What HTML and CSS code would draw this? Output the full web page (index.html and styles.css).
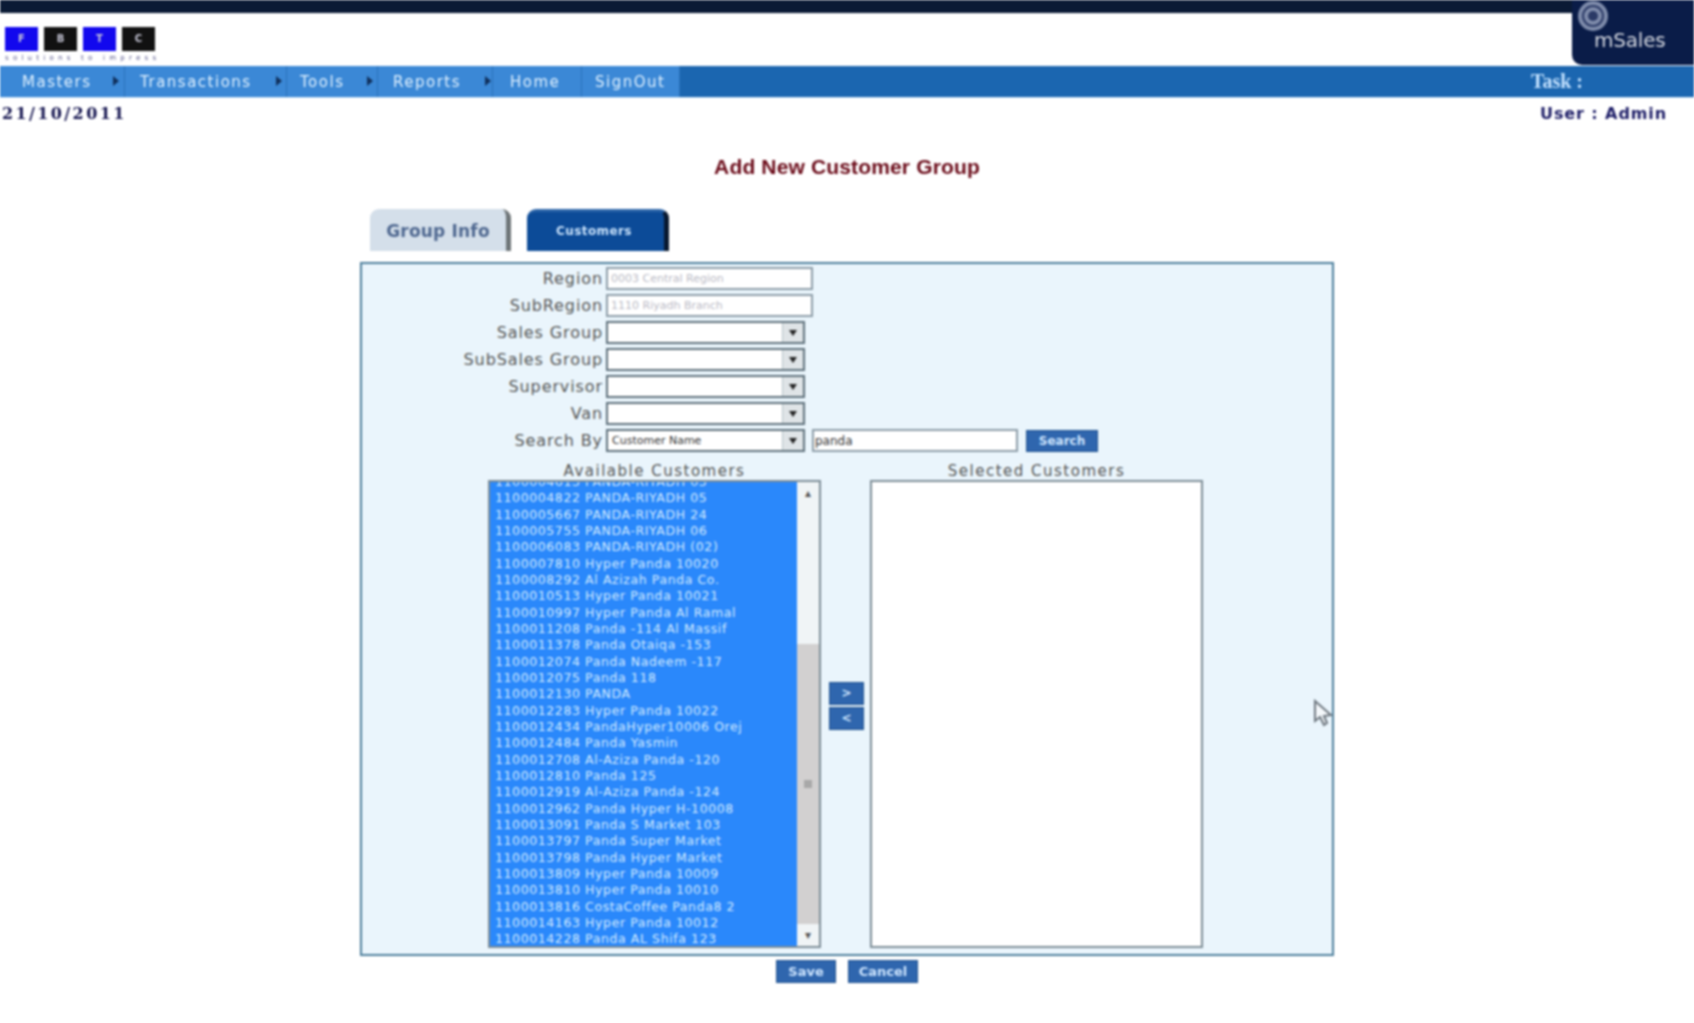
FILE: index.html
```html
<!DOCTYPE html>
<html lang="en">
<head>
    <meta charset="UTF-8">
    <meta name="viewport" content="width=device-width, initial-scale=1.0">
    <title>Add New Customer Group</title>
    <link rel="stylesheet" href="styles.css">
</head>
<body>
    <div class="page">
        <div class="topbar"></div>
        <div class="header">
            <div class="logo">
                <div class="logo-boxes">
                    <span class="logo-box blue">F</span>
                    <span class="logo-box black">B</span>
                    <span class="logo-box blue">T</span>
                    <span class="logo-box black">C</span>
                </div>
                <div class="logo-tag">solutions to impress</div>
            </div>
        </div>
        <div class="brand">
            <svg class="brand-icon" width="32" height="32" viewBox="0 0 32 32">
                <circle cx="16" cy="16" r="15" fill="#7f8cab"/>
                <circle cx="16" cy="16" r="10" fill="none" stroke="#2b3a66" stroke-width="2"/>
                <circle cx="16" cy="16" r="5" fill="#2b3a66"/>
            </svg>
            <span class="brand-name">mSales</span>
        </div>
        <div class="nav">
            <ul class="menu">
                <li class="menu-item item-masters">Masters<span class="menu-arrow"></span></li>
                <li class="menu-item item-transactions">Transactions<span class="menu-arrow"></span></li>
                <li class="menu-item item-tools">Tools<span class="menu-arrow"></span></li>
                <li class="menu-item item-reports">Reports<span class="menu-arrow"></span></li>
                <li class="menu-item item-home">Home</li>
                <li class="menu-item item-signout">SignOut</li>
            </ul>
            <div class="task">Task :</div>
        </div>
        <div class="info">
            <div class="date">21/10/2011</div>
            <div class="user">User : Admin</div>
        </div>
        <h1 class="title">Add New Customer Group</h1>

        <div class="wrap">
            <div class="tabs">
                <div class="tab tab-info">Group Info</div>
                <div class="tab tab-customers">Customers</div>
            </div>
            <div class="panel">
                <div class="form">
                    <label class="lbl">Region</label>
                    <input class="text wide" type="text" value="0003 Central Region" disabled>

                    <label class="lbl">SubRegion</label>
                    <input class="text wide" type="text" value="1110 Riyadh Branch" disabled>

                    <label class="lbl">Sales Group</label>
                    <div class="select"><span class="select-value"></span><span class="select-btn"></span></div>

                    <label class="lbl">SubSales Group</label>
                    <div class="select"><span class="select-value"></span><span class="select-btn"></span></div>

                    <label class="lbl">Supervisor</label>
                    <div class="select"><span class="select-value"></span><span class="select-btn"></span></div>

                    <label class="lbl">Van</label>
                    <div class="select"><span class="select-value"></span><span class="select-btn"></span></div>

                    <label class="lbl">Search By</label>
                    <div class="search-row">
                        <div class="select"><span class="select-value">Customer Name</span><span class="select-btn"></span></div>
                        <input class="text search-text" type="text" value="panda">
                        <button class="btn btn-search">Search</button>
                    </div>
                </div>

                <div class="lists">
                    <div class="list-col">
                        <div class="list-title">Available Customers</div>
                        <div class="listbox">
                            <div class="options">
                                <div class="opt">1100004613 PANDA-RIYADH 03</div>
                                <div class="opt">1100004822 PANDA-RIYADH 05</div>
                                <div class="opt">1100005667 PANDA-RIYADH 24</div>
                                <div class="opt">1100005755 PANDA-RIYADH 06</div>
                                <div class="opt">1100006083 PANDA-RIYADH (02)</div>
                                <div class="opt">1100007810 Hyper Panda 10020</div>
                                <div class="opt">1100008292 Al Azizah Panda Co.</div>
                                <div class="opt">1100010513 Hyper Panda 10021</div>
                                <div class="opt">1100010997 Hyper Panda Al Ramal</div>
                                <div class="opt">1100011208 Panda -114 Al Massif</div>
                                <div class="opt">1100011378 Panda Otaiqa -153</div>
                                <div class="opt">1100012074 Panda Nadeem -117</div>
                                <div class="opt">1100012075 Panda 118</div>
                                <div class="opt">1100012130 PANDA</div>
                                <div class="opt">1100012283 Hyper Panda 10022</div>
                                <div class="opt">1100012434 PandaHyper10006 Orej</div>
                                <div class="opt">1100012484 Panda Yasmin</div>
                                <div class="opt">1100012708 Al-Aziza Panda -120</div>
                                <div class="opt">1100012810 Panda 125</div>
                                <div class="opt">1100012919 Al-Aziza Panda -124</div>
                                <div class="opt">1100012962 Panda Hyper H-10008</div>
                                <div class="opt">1100013091 Panda S Market 103</div>
                                <div class="opt">1100013797 Panda Super Market</div>
                                <div class="opt">1100013798 Panda Hyper Market</div>
                                <div class="opt">1100013809 Hyper Panda 10009</div>
                                <div class="opt">1100013810 Hyper Panda 10010</div>
                                <div class="opt">1100013816 CostaCoffee Panda8 2</div>
                                <div class="opt">1100014163 Hyper Panda 10012</div>
                                <div class="opt">1100014228 Panda AL Shifa 123</div>
                            </div>
                            <div class="scrollbar">
                                <div class="scroll-btn">&#9652;</div>
                                <div class="scroll-space"></div>
                                <div class="scroll-thumb"><span class="scroll-grip"></span></div>
                                <div class="scroll-btn">&#9662;</div>
                            </div>
                        </div>
                    </div>
                    <div class="move">
                        <button class="btn btn-move">&gt;</button>
                        <button class="btn btn-move">&lt;</button>
                    </div>
                    <div class="list-col">
                        <div class="list-title">Selected Customers</div>
                        <div class="listbox empty"></div>
                    </div>
                </div>
                <svg class="cursor" width="20" height="28" viewBox="0 0 20 28">
                    <path d="M2 2 L2 22 L7 18 L11 26 L14 24 L11 17 L18 16 Z" fill="#f4f8fb" stroke="#6f7880" stroke-width="2"/>
                </svg>
            </div>
            <div class="actions">
                <button class="btn btn-save">Save</button>
                <button class="btn btn-cancel">Cancel</button>
            </div>
        </div>
    </div>
</body>
</html>
```

FILE: styles.css
```css
html, body {
    margin: 0;
    padding: 0;
    background: #fff;
}
.page {
    position: relative;
    height: 1023px;
    overflow: hidden;
    font-family: 'DejaVu Sans', sans-serif;
    filter: blur(0.8px);
}
.topbar {
    height: 13px;
    background: #0a1a35;
}
.header {
    height: 53px;
    padding: 14px 0 0 5px;
    box-sizing: border-box;
}
.logo-boxes {
    display: flex;
    gap: 5px;
}
.logo-box {
    width: 33px;
    height: 24px;
    margin-right: 1px;
    color: #c8c8d8;
    font-size: 10px;
    font-weight: bold;
    line-height: 24px;
    text-align: center;
}
.logo-box.blue { background: #1208ee; }
.logo-box.black { background: #111; }
.logo-tag {
    margin-top: 2px;
    color: #55558a;
    font-size: 7px;
    letter-spacing: 4.25px;
    line-height: 10px;
    white-space: nowrap;
}
.brand {
    position: absolute;
    top: 0;
    right: 0;
    width: 122px;
    height: 65px;
    background: #0a1c48;
    border-bottom-left-radius: 10px;
}
.brand-icon {
    position: absolute;
    top: 0;
    left: 5px;
}
.brand-name {
    position: absolute;
    top: 28px;
    left: 22px;
    color: #d5d8e0;
    font-size: 20px;
    letter-spacing: -0.2px;
}
.nav {
    height: 32px;
    display: flex;
    justify-content: space-between;
    background: #1b66b0;
    border-bottom: 1px solid #cfe6fa;
    box-sizing: border-box;
}
.menu {
    display: flex;
    margin: 0;
    padding: 0;
    list-style: none;
    background: #3b88d6;
}
.menu-item {
    position: relative;
    box-sizing: border-box;
    color: #e2f2ff;
    font-size: 15px;
    letter-spacing: 1.5px;
    line-height: 33px;
    border-right: 1px solid #2a72bb;
    white-space: nowrap;
}
.menu-arrow {
    position: absolute;
    top: 10px;
    right: 4px;
    border-left: 6px solid #10305c;
    border-top: 5px solid transparent;
    border-bottom: 5px solid transparent;
}
.item-masters { width: 125px; padding-left: 22px; }
.item-transactions { width: 162px; padding-left: 15px; }
.item-tools { width: 91px; padding-left: 13px; }
.item-reports { width: 115px; padding-left: 15px; }
.item-home { width: 89px; padding-left: 17px; }
.item-signout { width: 98px; padding-left: 13px; }
.item-masters .menu-arrow { right: 5px; }
.item-reports .menu-arrow { right: 1px; }
.task {
    margin-right: 111px;
    color: #c4e2ff;
    font-family: 'Liberation Serif', serif;
    font-size: 20px;
    font-weight: bold;
    line-height: 30px;
}
.info {
    display: flex;
    justify-content: space-between;
    height: 30px;
    padding: 6px 27px 0 2px;
    box-sizing: border-box;
    color: #1c1c66;
    font-weight: bold;
    line-height: 20px;
}
.date {
    font-family: 'DejaVu Serif', serif;
    font-size: 16px;
    color: #14144f;
    letter-spacing: 2.4px;
}
.user {
    font-size: 16px;
    letter-spacing: 0.9px;
}
.title {
    margin: 26px 0 0;
    color: #6a0a18;
    font-family: 'Liberation Sans', sans-serif;
    font-size: 21px;
    font-weight: bold;
    letter-spacing: 0.15px;
    line-height: 26px;
    text-align: center;
}
.wrap {
    width: 974px;
    margin: 29px 0 0 360px;
}
.tabs {
    display: flex;
    gap: 16px;
    height: 42px;
    padding-left: 10px;
    margin-bottom: 11px;
}
.tab {
    box-sizing: border-box;
    width: 141px;
    border-radius: 9px 9px 0 0;
    text-align: center;
    font-weight: bold;
}
.tab-info {
    background: #d4dfea;
    border-right: 5px solid #6e7578;
    color: #4f6890;
    font-size: 17px;
    letter-spacing: 0.2px;
    line-height: 44px;
}
.tab-customers {
    width: 142px;
    padding-right: 3px;
    background: #0c4b98;
    border-top: 3px solid #2b64a8;
    border-right: 5px solid #08182f;
    color: #c9e2fb;
    font-size: 12px;
    letter-spacing: 0.4px;
    line-height: 38px;
}
.panel {
    position: relative;
    box-sizing: border-box;
    height: 694px;
    padding-top: 1px;
    background: #eaf5fc;
    border: 2px solid #4d7f9c;
}
.form {
    display: grid;
    grid-template-columns: 241px auto;
    column-gap: 3px;
    grid-auto-rows: 27px;
    align-items: center;
}
.lbl {
    color: #555;
    font-size: 16px;
    letter-spacing: 0.9px;
    line-height: 20px;
    text-align: right;
    white-space: nowrap;
}
.text {
    box-sizing: border-box;
    height: 23px;
    padding: 0 3px;
    background: #fff;
    border: 2px solid #8d9da8;
    color: #333;
    font-family: 'DejaVu Sans', sans-serif;
    font-size: 11px;
}
.text:disabled {
    color: #b9b9c4;
}
.wide {
    width: 207px;
}
.select {
    box-sizing: border-box;
    display: flex;
    width: 199px;
    height: 23px;
    background: #fff;
    border: 2px solid #5f717c;
}
.select-value {
    flex: 1;
    padding-left: 4px;
    color: #333;
    font-size: 11px;
    line-height: 19px;
}
.select-btn {
    position: relative;
    width: 20px;
    background: #dfe4e7;
    border-left: 1px solid #b6c2c9;
}
.select-btn::after {
    content: "";
    position: absolute;
    top: 7px;
    left: 6px;
    border-top: 6px solid #222;
    border-left: 4px solid transparent;
    border-right: 4px solid transparent;
}
.search-row {
    display: flex;
    align-items: center;
}
.search-text {
    width: 206px;
    margin-left: 7px;
    font-size: 12px;
    padding: 0 1px;
}
.btn {
    box-sizing: border-box;
    padding: 0;
    background: #2f66ae;
    border: 1px solid #23548f;
    color: #cfe6ff;
    font-family: 'DejaVu Sans', sans-serif;
    font-weight: bold;
}
.btn-search {
    width: 72px;
    height: 22px;
    margin-left: 8px;
    font-size: 12px;
}
.lists {
    display: flex;
    align-items: center;
    margin-top: 8px;
    padding-left: 126px;
}
.list-col {
    width: 333px;
}
.list-title {
    height: 18px;
    color: #555;
    font-size: 15px;
    letter-spacing: 1.5px;
    line-height: 18px;
    text-align: center;
    white-space: nowrap;
}
.listbox {
    display: flex;
    box-sizing: border-box;
    height: 468px;
    overflow: hidden;
    background: #fff;
    border: 2px solid #7d8d97;
}
.options {
    flex: 1;
    padding: 0 0 0 5px;
    overflow: hidden;
    background: #2a88fb;
    color: #d5ecff;
    font-size: 12.5px;
    letter-spacing: 0.6px;
    line-height: 16.33px;
}
.opt {
    white-space: nowrap;
}
.opt:first-child {
    margin-top: -8px;
}
.scrollbar {
    display: flex;
    flex-direction: column;
    width: 22px;
    background: #f0f4f6;
}
.scroll-btn {
    height: 22px;
    color: #555;
    font-size: 12px;
    line-height: 22px;
    text-align: center;
}
.scroll-space {
    height: 140px;
}
.scroll-thumb {
    display: flex;
    flex: 1;
    align-items: center;
    justify-content: center;
    background: #d2d0d0;
}
.scroll-grip {
    width: 8px;
    height: 8px;
    background: #a8a8a8;
}
.move {
    display: flex;
    flex-direction: column;
    gap: 2px;
    margin: 0 6px 0 8px;
    padding-top: 1px;
}
.btn-move {
    width: 35px;
    height: 23px;
    font-size: 12px;
}
.cursor {
    position: absolute;
    top: 435px;
    left: 951px;
}
.actions {
    display: flex;
    justify-content: center;
    gap: 12px;
    margin-top: 4px;
}
.btn-save {
    width: 60px;
    height: 23px;
    font-size: 13px;
}
.btn-cancel {
    width: 70px;
    height: 23px;
    font-size: 13px;
}
```
